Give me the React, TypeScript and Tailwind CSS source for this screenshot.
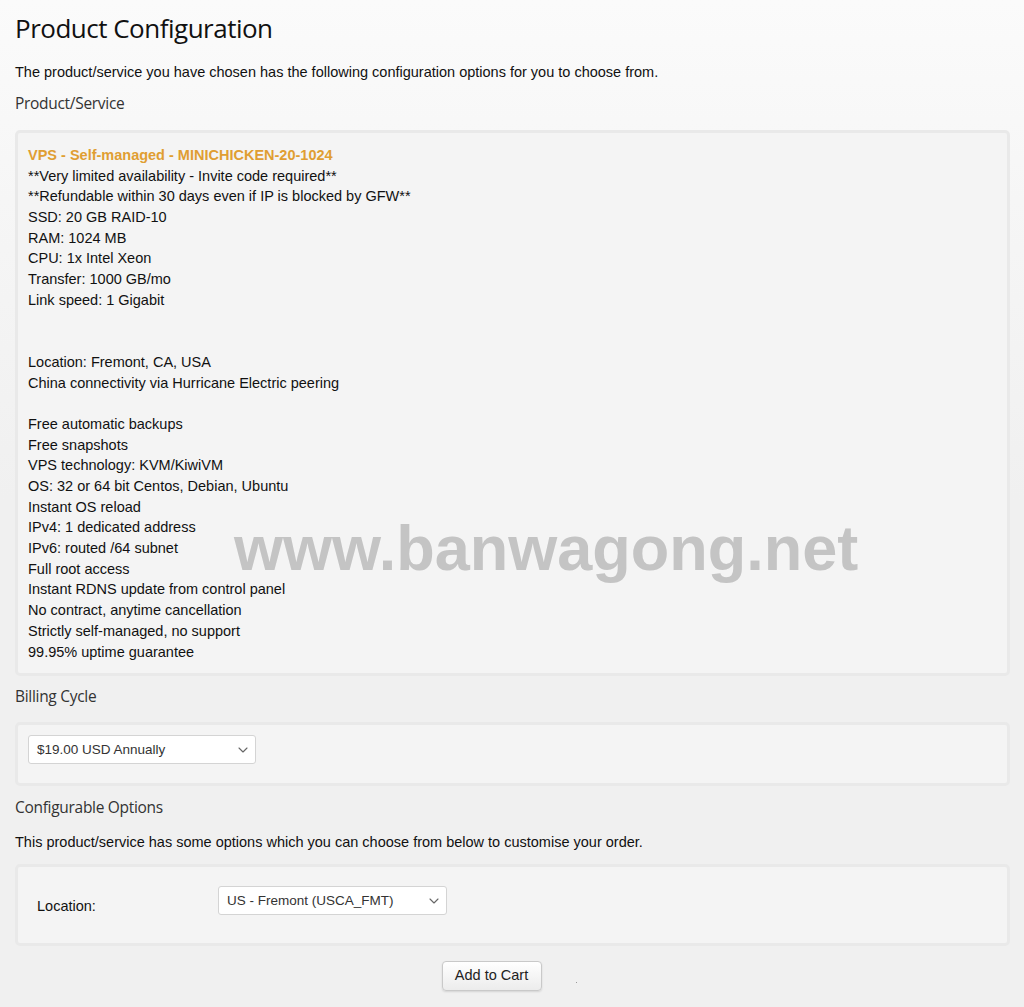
import React from "react";

const HEAD = "font-['Open_Sans',sans-serif]";
const BODY = "font-['Liberation_Sans',Arial,sans-serif]";

const specLines = [
  "**Very limited availability - Invite code required**",
  "**Refundable within 30 days even if IP is blocked by GFW**",
  "SSD: 20 GB RAID-10",
  "RAM: 1024 MB",
  "CPU: 1x Intel Xeon",
  "Transfer: 1000 GB/mo",
  "Link speed: 1 Gigabit",
  "",
  "",
  "Location: Fremont, CA, USA",
  "China connectivity via Hurricane Electric peering",
  "",
  "Free automatic backups",
  "Free snapshots",
  "VPS technology: KVM/KiwiVM",
  "OS: 32 or 64 bit Centos, Debian, Ubuntu",
  "Instant OS reload",
  "IPv4: 1 dedicated address",
  "IPv6: routed /64 subnet",
  "Full root access",
  "Instant RDNS update from control panel",
  "No contract, anytime cancellation",
  "Strictly self-managed, no support",
  "99.95% uptime guarantee",
];

const Chevron: React.FC<{ className?: string }> = ({ className }) => (
  <svg className={className} viewBox="0 0 10 6" fill="none" stroke="#666" strokeWidth="1.1" aria-hidden="true">
    <path d="M1 1l4 4 4-4" strokeLinecap="round" strokeLinejoin="round" />
  </svg>
);

const FakeSelect: React.FC<{ value: string; width: string; className?: string }> = ({ value, width, className = "" }) => (
  <div
    className={`${width} h-[29px] flex items-center justify-between bg-white border border-[#d4d4d4] rounded-[3px] pl-[8px] pr-[7px] text-[13.5px] text-[#333] ${BODY} ${className}`}
  >
    <span>{value}</span>
    <Chevron className="w-[10px] h-[6px]" />
  </div>
);

const Card: React.FC<{ className?: string; children: React.ReactNode }> = ({ className = "", children }) => (
  <div className={`bg-[#f4f4f4] border-[3px] border-[#e9e9e9] rounded-[5px] ${className}`}>{children}</div>
);

export default function App() {
  return (
    <div className="min-h-[1007px] bg-[linear-gradient(to_bottom,#fbfbfb_0px,#f6f6f6_200px,#f0f0f0_500px,#f0f0f0_100%)] relative">
      <div className="pl-[15px] pr-[14px]">
        <h1 className={`${HEAD} text-[26px] tracking-[-0.5px] text-[#111] leading-[32px] pt-[12px]`}>
          Product Configuration
        </h1>
        <p className={`${BODY} text-[14.5px] text-[#111] mt-[18px] leading-[20px]`}>
          The product/service you have chosen has the following configuration options for you to choose from.
        </p>
        <h2 className={`${HEAD} text-[15.5px] tracking-[-0.3px] text-[#333] mt-[10px] leading-[22px]`}>Product/Service</h2>

        <Card className="mt-[16px] px-[10px] pt-[12px] pb-[11px]">
          <div className={`${BODY} text-[14.5px] leading-[20.7px] text-[#111]`}>
            <div className="font-bold text-[#e09e32]">VPS - Self-managed - MINICHICKEN-20-1024</div>
            {specLines.map((l, i) => (
              <div key={i} className="h-[20.7px]">
                {l}
              </div>
            ))}
          </div>
        </Card>

        <h2 className={`${HEAD} text-[15.5px] tracking-[-0.3px] text-[#333] mt-[9px] leading-[22px]`}>Billing Cycle</h2>
        <Card className="mt-[15px] px-[10px] py-[10px] h-[64px]">
          <FakeSelect value="$19.00 USD Annually" width="w-[228px]" />
        </Card>

        <h2 className={`${HEAD} text-[15.5px] tracking-[-0.3px] text-[#333] mt-[10px] leading-[22px]`}>
          Configurable Options
        </h2>
        <p className={`${BODY} text-[14.5px] text-[#111] mt-[14px] leading-[20px]`}>
          This product/service has some options which you can choose from below to customise your order.
        </p>
        <Card className="mt-[12px] h-[82px] flex items-start">
          <div className={`${BODY} text-[14.5px] text-[#111] w-[200px] pl-[19px] mt-[29px]`}>Location:</div>
          <FakeSelect value="US - Fremont (USCA_FMT)" width="w-[229px]" className="mt-[19px]" />
        </Card>

        <div className="flex justify-center items-center mt-[15px] relative">
          <button
            type="button"
            className={`${BODY} text-[14.5px] text-[#222] w-[100px] h-[30px] rounded-[4px] border border-[#c9c9c9] bg-[linear-gradient(to_bottom,#ffffff,#ececec)] shadow-[0_1px_2px_rgba(0,0,0,0.12)] ml-[-42px]`}
          >
            Add to Cart
          </button>
          <span className="absolute left-[561px] top-[21px] w-[1px] h-[1px] bg-[#999]" />
        </div>
      </div>

      <div
        className={`${BODY} absolute left-[234px] top-[512px] font-bold text-[63px] leading-[72px] text-[#c4c4c4] pointer-events-none select-none`}
      >
        www.banwagong.net
      </div>
    </div>
  );
}
